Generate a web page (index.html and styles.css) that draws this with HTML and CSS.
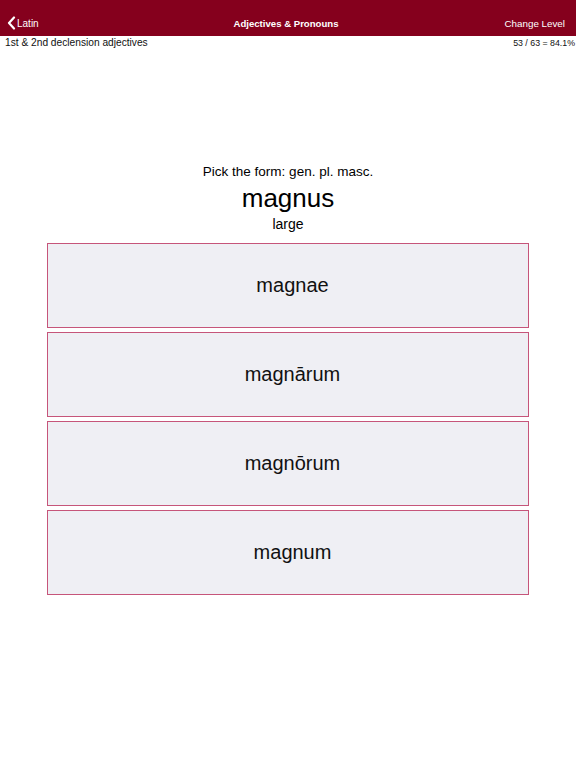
FILE: index.html
```html
<!DOCTYPE html>
<html>
<head>
	<title>Adjectives &amp; Pronouns</title>
	<link rel="stylesheet" href="styles.css">
</head>
<body>
	<div class="navbar">
		<div class="nav-left">
			<svg class="chevron" width="9" height="14" viewBox="0 0 9 14">
				<path d="M7 1.5 L2 7 L7 12.5" fill="none" stroke="#fff" stroke-width="2.2" stroke-linecap="round" stroke-linejoin="round"/>
			</svg>
			<span>Latin</span>
		</div>
		<div class="nav-title">Adjectives &amp; Pronouns</div>
		<div class="nav-right">Change Level</div>
	</div>

	<div class="status">
		<span class="level-name">1st &amp; 2nd declension adjectives</span>
		<span class="score">53 / 63 = 84.1%</span>
	</div>

	<div class="quiz">
		<div class="prompt">Pick the form: gen. pl. masc.</div>
		<div class="word">magnus</div>
		<div class="meaning">large</div>

		<div class="choices">
			<div class="choice">magnae</div>
			<div class="choice">magnārum</div>
			<div class="choice">magnōrum</div>
			<div class="choice">magnum</div>
		</div>
	</div>
</body>
</html>
```

FILE: styles.css
```css
* {
	margin: 0;
	padding: 0;
	box-sizing: border-box;
}

body {
	font-family: "Liberation Sans", Arial, sans-serif;
	color: #000;
	background-color: #fff;
}

.navbar {
	height: 36px;
	background-color: #85001d;
	color: #fff;
	display: flex;
	align-items: center;
	justify-content: space-between;
	padding: 10px 11px 0 7px;
	font-size: 10px;
}

.nav-left {
	display: flex;
	align-items: center;
	gap: 1px;
	width: 120px;
}

.nav-title {
	font-weight: bold;
	font-size: 9.6px;
}

.nav-right {
	width: 120px;
	text-align: right;
	font-size: 9.8px;
}

.status {
	display: flex;
	justify-content: space-between;
	align-items: baseline;
	padding: 1px 1px 0 5px;
	font-size: 10.2px;
	color: #111;
}

.score {
	font-size: 8.8px;
}

.quiz {
	display: flex;
	flex-direction: column;
	align-items: center;
	padding-top: 115px;
}

.prompt {
	font-size: 13.5px;
	line-height: 18px;
}

.word {
	font-size: 26px;
	line-height: 30px;
	margin-top: 2px;
}

.meaning {
	font-size: 14px;
	line-height: 18px;
	margin-top: 2px;
}

.choices {
	display: flex;
	flex-direction: column;
	gap: 4px;
	margin-top: 10px;
	width: 482px;
}

.choice {
	height: 85px;
	border: 1px solid #c6557a;
	background-color: #efeff4;
	display: flex;
	align-items: center;
	justify-content: center;
	padding-left: 9px;
	font-size: 20px;
	color: #111;
}
```
